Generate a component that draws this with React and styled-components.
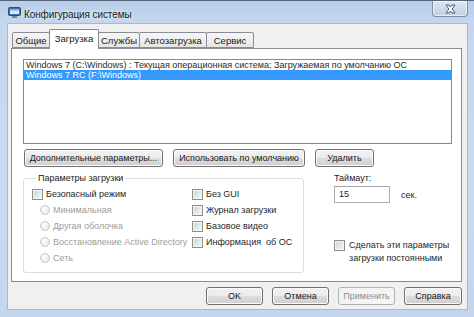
import React from 'react';
import styled, { createGlobalStyle } from 'styled-components';

const Global = createGlobalStyle`
  html, body { margin: 0; padding: 0; background: #ffffff; }
  body { font-family: "Liberation Sans", Arial, sans-serif; }
  * { box-sizing: border-box; }
`;

const Win = styled.div`
  width: 474px;
  height: 317px;
  display: flex;
  flex-direction: column;
  border-top: 1px solid #56667c;
  padding: 0 6px 7px 7px;
  background: linear-gradient(180deg, #b7cde8 0px, #c4d7ee 22px, #c9dbf0 60%, #c3d6ee 100%);
`;

const TitleBar = styled.div`
  height: 22px;
  display: flex;
  align-items: center;
  margin-left: 1px;
`;

const Title = styled.span`
  margin-left: 3px;
  margin-top: 4px;
  font-size: 10px;
  letter-spacing: -0.1px;
  color: #1a1a1a;
  text-shadow: 0 0 5px #eaf2fb, 0 0 3px #eaf2fb;
`;

const CloseBtn = styled.div`
  margin-left: auto;
  align-self: flex-start;
  width: 36px;
  height: 16px;
  border: 1px solid #7d8ea6;
  border-top: none;
  border-radius: 0 0 4px 4px;
  background: linear-gradient(180deg, #dfe7f1 0%, #cfdbea 50%, #c0cfe2 100%);
  box-shadow: inset 0 0 0 1px rgba(255,255,255,0.6);
  display: flex;
  align-items: center;
  justify-content: center;
`;

const Client = styled.div`
  flex: 1;
  display: flex;
  flex-direction: column;
  background: #f0f0f0;
  border: 1px solid #a9b9cd;
  padding: 5px 5px 4px 3px;
`;

const TabStrip = styled.div`
  height: 19px;
  display: flex;
  align-items: flex-end;
  padding-left: 2px;
  position: relative;
  z-index: 1;
`;

const Tab = styled.div`
  width: ${p => p.$w}px;
  height: ${p => (p.$active ? 20 : 16)}px;
  margin-left: -1px;
  margin-bottom: ${p => (p.$active ? -1 : 0)}px;
  border: 1px solid #898c95;
  border-bottom: ${p => (p.$active ? 'none' : '1px solid #898c95')};
  border-radius: 2px 2px 0 0;
  background: ${p => (p.$active ? '#ffffff' : 'linear-gradient(180deg, #f6f6f6 0%, #efefef 50%, #e5e5e5 100%)')};
  font-size: 9.5px;
  color: #1a1a1a;
  display: flex;
  align-items: center;
  justify-content: center;
  padding-bottom: ${p => (p.$active ? 2 : 0)}px;
  position: relative;
  z-index: ${p => (p.$active ? 2 : 1)};
`;

const Panel = styled.div`
  height: 234px;
  border: 1px solid #898c95;
  background: #ffffff;
  padding: 10px 9px 0 11px;
  display: flex;
  flex-direction: column;
`;

const ListBox = styled.div`
  height: 85px;
  border: 1px solid #828790;
  background: #ffffff;
  display: flex;
  flex-direction: column;
`;

const ListRow = styled.div`
  height: 10px;
  line-height: 10px;
  font-size: 9px;
  padding-left: 2px;
  white-space: nowrap;
  color: ${p => (p.$sel ? '#ffffff' : '#2a2a2a')};
  background: ${p => (p.$sel ? '#3399ff' : 'transparent')};
`;

const ButtonRow = styled.div`
  display: flex;
  gap: 10px;
  margin-top: 5px;
  padding-left: 1px;
`;

const Button = styled.button`
  width: ${p => p.$w}px;
  height: 18px;
  padding: 0;
  border: 1px solid ${p => (p.disabled ? '#adb2b5' : '#707070')};
  border-radius: 3px;
  background: ${p => (p.disabled
    ? '#f4f4f4'
    : 'linear-gradient(180deg, #f2f2f2 0%, #ebebeb 48%, #dddddd 52%, #cfcfcf 100%)')};
  box-shadow: inset 0 0 0 1px ${p => (p.disabled ? '#f4f4f4' : '#fbfbfb')};
  font-family: "Liberation Sans", Arial, sans-serif;
  font-size: 9px;
  color: ${p => (p.disabled ? '#8d8d8d' : '#1a1a1a')};
`;

const Lower = styled.div`
  display: flex;
  margin-top: 5px;
`;

const Group = styled.fieldset`
  width: 281px;
  height: 101px;
  margin: 0;
  padding: 2px 8px 0 8px;
  border: 1px solid #d5dfe5;
  border-radius: 3px;
  display: flex;
  min-width: 0;
`;

const Legend = styled.legend`
  font-size: 9px;
  line-height: 12px;
  color: #1a1a1a;
  padding: 0 2px;
  margin-left: 4px;
`;

const Col = styled.div`
  width: ${p => (p.$w ? `${p.$w}px` : 'auto')};
  display: flex;
  flex-direction: column;
`;

const OptRow = styled.div`
  height: 16px;
  display: flex;
  align-items: center;
  gap: 3px;
  padding-left: ${p => p.$indent || 0}px;
  font-size: 9px;
  color: ${p => (p.$disabled ? '#9c9c9c' : '#1e1e1e')};
  white-space: nowrap;
`;

const Check = styled.span`
  width: 11px;
  height: 11px;
  flex: none;
  margin-top: ${p => p.$mt || 0}px;
  border: 1px solid #8e8f8f;
  background: linear-gradient(135deg, #c9ccd1 0%, #e4e5e7 50%, #f7f7f7 100%);
  box-shadow: inset 0 0 0 1px #f4f4f4;
`;

const Radio = styled.span`
  width: 10px;
  height: 10px;
  flex: none;
  border-radius: 50%;
  border: 1px solid #c6c6c6;
  background: radial-gradient(circle at 40% 40%, #ffffff 0%, #ececec 60%, #dcdcdc 100%);
`;

const Side = styled.div`
  margin-left: 30px;
  display: flex;
  flex-direction: column;
`;

const Label = styled.div`
  font-size: 9px;
  line-height: 12px;
  color: #1e1e1e;
`;

const TimeoutRow = styled.div`
  display: flex;
  align-items: center;
  margin-top: 2px;
  gap: 11px;
`;

const Input = styled.div`
  width: 56px;
  height: 17px;
  border: 1px solid #abadb3;
  border-top-color: #a2a5ab;
  background: #ffffff;
  font-size: 9px;
  line-height: 15px;
  padding-left: 4px;
  color: #1e1e1e;
`;

const PermRow = styled.div`
  display: flex;
  align-items: flex-start;
  gap: 4px;
  margin-top: 36px;
  font-size: 9px;
  line-height: 13px;
  color: #1e1e1e;
`;

const Footer = styled.div`
  display: flex;
  justify-content: flex-end;
  gap: 9px;
  margin-top: 5px;
`;

const AppIcon = () => (
  <svg width="13" height="11" viewBox="0 0 13 11">
    <rect x="0.5" y="0.5" width="12" height="8" rx="1" fill="#3c6fb4" stroke="#2b4f86" />
    <rect x="2" y="2" width="9" height="5" fill="#dfe9f6" />
    <rect x="2" y="2" width="9" height="1.5" fill="#7fa8dc" />
    <rect x="4" y="9" width="5" height="2" fill="#7b8492" />
  </svg>
);

const CloseX = () => (
  <svg width="11" height="10" viewBox="0 0 11 10">
    <path
      d="M1 1 L4 1 L5.5 3 L7 1 L10 1 L7.2 5 L10 9 L7 9 L5.5 7 L4 9 L1 9 L3.8 5 Z"
      fill="#ffffff"
      stroke="#3b4a60"
      strokeWidth="0.9"
      strokeLinejoin="round"
    />
  </svg>
);

const tabs = [
  { t: 'Общие', w: 38 },
  { t: 'Загрузка', w: 50, active: true },
  { t: 'Службы', w: 42 },
  { t: 'Автозагрузка', w: 68 },
  { t: 'Сервис', w: 48 },
];

export default function App() {
  return (
    <>
      <Global />
      <Win>
        <TitleBar>
          <AppIcon />
          <Title>Конфигурация системы</Title>
          <CloseBtn><CloseX /></CloseBtn>
        </TitleBar>
        <Client>
          <TabStrip>
            {tabs.map(x => (
              <Tab key={x.t} $w={x.w} $active={x.active}>{x.t}</Tab>
            ))}
          </TabStrip>
          <Panel>
            <ListBox>
              <ListRow>Windows 7 (C:\Windows) : Текущая операционная система; Загружаемая по умолчанию ОС</ListRow>
              <ListRow $sel>Windows 7 RC (F:\Windows)</ListRow>
            </ListBox>
            <ButtonRow>
              <Button $w={139}>Дополнительные параметры...</Button>
              <Button $w={132}>Использовать по умолчанию</Button>
              <Button $w={59}>Удалить</Button>
            </ButtonRow>
            <Lower>
              <Group>
                <Legend>Параметры загрузки</Legend>
                <Col $w={160}>
                  <OptRow><Check />Безопасный режим</OptRow>
                  <OptRow $indent={8} $disabled><Radio />Минимальная</OptRow>
                  <OptRow $indent={8} $disabled><Radio />Другая оболочка</OptRow>
                  <OptRow $indent={8} $disabled><Radio />Восстановление Active Directory</OptRow>
                  <OptRow $indent={8} $disabled><Radio />Сеть</OptRow>
                </Col>
                <Col>
                  <OptRow><Check />Без GUI</OptRow>
                  <OptRow><Check />Журнал загрузки</OptRow>
                  <OptRow><Check />Базовое видео</OptRow>
                  <OptRow><Check />Информация&nbsp; об ОС</OptRow>
                </Col>
              </Group>
              <Side>
                <Label>Таймаут:</Label>
                <TimeoutRow>
                  <Input>15</Input>
                  <Label>сек.</Label>
                </TimeoutRow>
                <PermRow>
                  <Check $mt={1} />
                  <span>Сделать эти параметры<br />загрузки постоянными</span>
                </PermRow>
              </Side>
            </Lower>
          </Panel>
          <Footer>
            <Button $w={57}>OK</Button>
            <Button $w={57}>Отмена</Button>
            <Button $w={57} disabled>Применить</Button>
            <Button $w={58}>Справка</Button>
          </Footer>
        </Client>
      </Win>
    </>
  );
}
